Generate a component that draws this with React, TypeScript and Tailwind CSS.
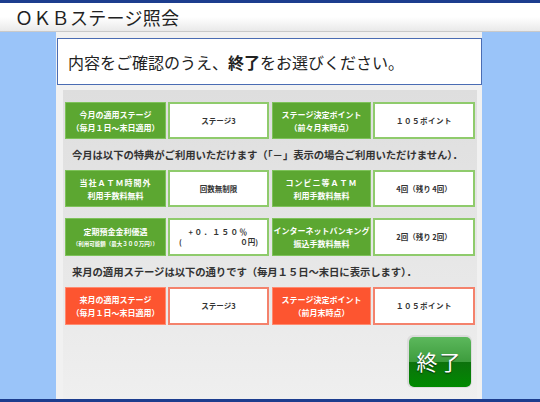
import React from "react";

const FONT = '"Noto Sans CJK JP", "Noto Sans", sans-serif';

function Label({ tone, children }: { tone: "green" | "orange"; children: React.ReactNode }) {
  const cls =
    tone === "green"
      ? "bg-[#5ca731] border border-[#7ec25a]"
      : "bg-[#fd5530] border border-[#ff8a70]";
  return (
    <div className={`${cls} h-full flex flex-col items-center justify-center text-white font-bold text-[8px] leading-[13px] text-center`}>
      {children}
    </div>
  );
}

function Value({ tone, children }: { tone: "green" | "orange"; children: React.ReactNode }) {
  const cls = tone === "green" ? "border-2 border-[#8fcb6c]" : "border-2 border-[#f4826c]";
  return (
    <div className={`${cls} bg-white h-full flex flex-col items-center justify-center text-[#333] font-bold text-[7.5px] leading-[10px] text-center`}>
      {children}
    </div>
  );
}

function Row({ h, children }: { h: string; children: React.ReactNode }) {
  return <div className={`${h} grid grid-cols-[101px_101px_100px_102px] gap-x-[2px] [&>*:nth-child(3)]:ml-[1px]`}>{children}</div>;
}

export default function App() {
  return (
    <div
      className="w-[540px] h-[402px] flex flex-col overflow-hidden bg-[#9ac4f9]"
      style={{ fontFamily: FONT }}
    >
      <div className="h-[3px] bg-[#1c3d8e]" />
      <div className="h-[29px] bg-gradient-to-b from-white via-white to-[#e9e9e9] border-b border-[#c9c9c9] flex items-center pl-[15px] text-[18px] text-[#222] leading-none tracking-[0.3px]">
        ＯＫＢステージ照会
      </div>
      <div className="flex-1 flex">
        <div className="w-[56px]" />
        <div className="w-[426px] bg-[#f1f1f1] flex flex-col pt-[6px]">
          <div className="ml-px h-[47px] bg-white border-[1.5px] border-[#4a6cb3] flex items-center pl-[10px] text-[16px] text-[#222]">
            内容をご確認のうえ、<span className="font-bold">終了</span>をお選びください。
          </div>
          <div className="mt-[5px] ml-[7px] w-[414px] flex-1 bg-gradient-to-b from-[#dedede] via-[#e6e6e6] to-[#efefef] pt-[12px] pl-[2px] flex flex-col">
            <Row h="h-[37px]">
              <Label tone="green">
                <span>今月の適用ステージ</span>
                <span>（毎月１日～末日適用）</span>
              </Label>
              <Value tone="green">ステージ3</Value>
              <Label tone="green">
                <span>ステージ決定ポイント</span>
                <span>（前々月末時点）</span>
              </Label>
              <Value tone="green">
                <span className="tracking-[0.5px]">１０５ポイント</span>
              </Value>
            </Row>
            <div className="h-[31px] flex items-center pl-[7px] text-[10.4px] font-bold text-[#333] tracking-[-0.1px]">
              今月は以下の特典がご利用いただけます（「－」表示の場合ご利用いただけません）．
            </div>
            <Row h="h-[37px]">
              <Label tone="green">
                <span className="tracking-[1px]">当社ＡＴＭ時間外</span>
                <span>利用手数料無料</span>
              </Label>
              <Value tone="green">回数無制限</Value>
              <Label tone="green">
                <span className="tracking-[1px]">コンビニ等ＡＴＭ</span>
                <span>利用手数料無料</span>
              </Label>
              <Value tone="green">4回（残り 4回）</Value>
            </Row>
            <div className="h-[11px]" />
            <Row h="h-[38px]">
              <Label tone="green">
                <span>定期預金金利優遇</span>
                <span className="text-[5.5px] leading-[12px]">（利用可能額（最大３００万円））</span>
              </Label>
              <Value tone="green">
                <span className="tracking-[1.5px]">+０．１５０％</span>
                <span className="w-full flex justify-between px-[9px]">
                  <span>(</span>
                  <span>０円)</span>
                </span>
              </Value>
              <Label tone="green">
                <span>インターネットバンキング</span>
                <span>振込手数料無料</span>
              </Label>
              <Value tone="green">2回（残り 2回）</Value>
            </Row>
            <div className="h-[31px] flex items-center pl-[7px] text-[10.4px] font-bold text-[#333] tracking-[-0.1px]">
              来月の適用ステージは以下の通りです（毎月１５日～末日に表示します）．
            </div>
            <Row h="h-[38px]">
              <Label tone="orange">
                <span>来月の適用ステージ</span>
                <span>（毎月１日～末日適用）</span>
              </Label>
              <Value tone="orange">ステージ3</Value>
              <Label tone="orange">
                <span>ステージ決定ポイント</span>
                <span>（前月末時点）</span>
              </Label>
              <Value tone="orange">
                <span className="tracking-[0.5px]">１０５ポイント</span>
              </Value>
            </Row>
            <div className="flex justify-end pr-[5px] mt-[10px]">
              <div className="rounded-[6px] p-[1.5px] bg-[#dcdcdc]">
                <div className="w-[62px] h-[50px] rounded-[5px] overflow-hidden relative flex flex-col">
                  <div className="h-1/2 bg-gradient-to-b from-[#5cb85c] to-[#3d9c3d]" />
                  <div className="h-1/2 bg-gradient-to-b from-[#0c720c] to-[#008a00]" />
                  <div className="absolute inset-0 flex items-center justify-center text-white text-[21px] tracking-[2px] [text-shadow:0_1px_1px_rgba(0,0,0,0.6)]">
                    終了
                  </div>
                </div>
              </div>
            </div>
          </div>
        </div>
        <div className="flex-1" />
      </div>
      <div className="h-[3px] bg-[#1c3d8e]" />
    </div>
  );
}
